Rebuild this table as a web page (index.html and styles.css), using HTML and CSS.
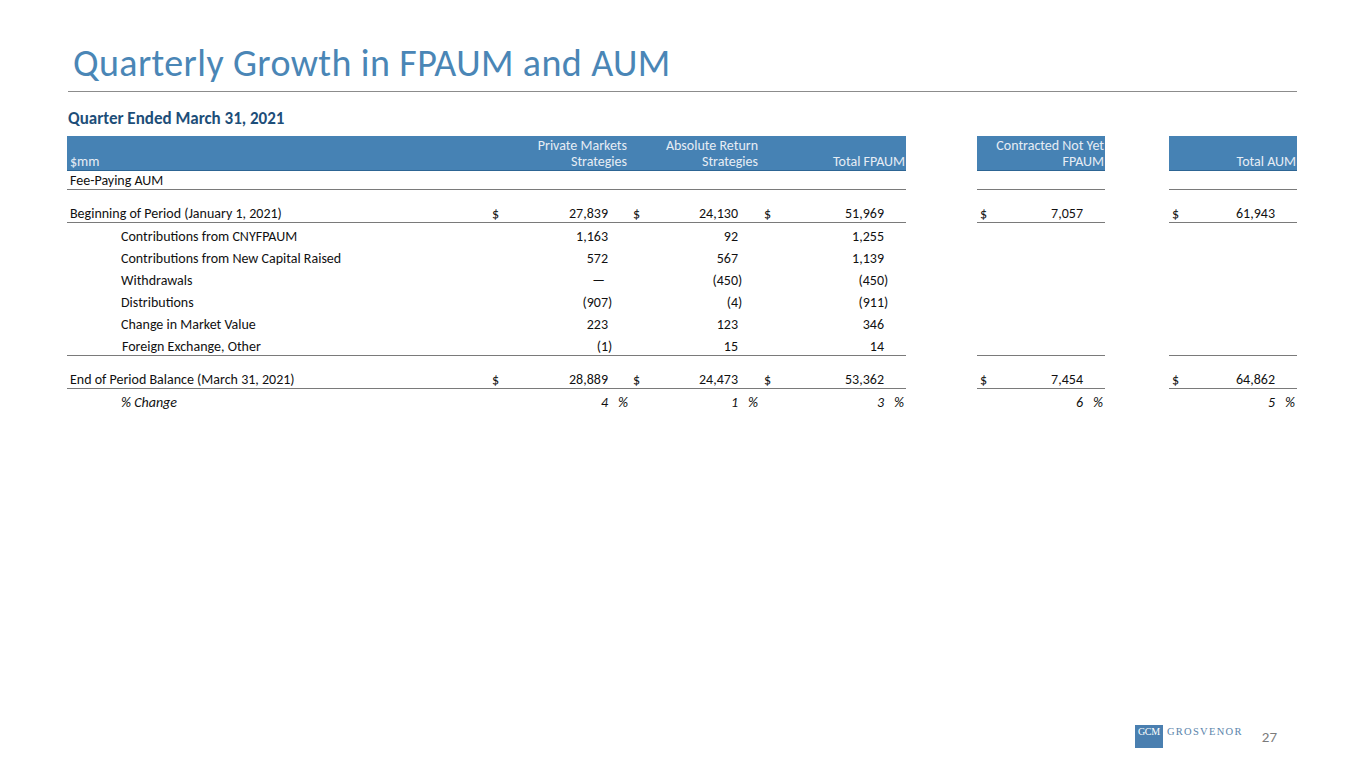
FILE: index.html
```html
<!DOCTYPE html>
<html lang="en">
<head>
<meta charset="utf-8">
<title>Quarterly Growth in FPAUM and AUM</title>
<link rel="stylesheet" href="styles.css">
</head>
<body>
<div class="slide">
  <h1 class="title">Quarterly Growth in FPAUM and AUM</h1>
  <div class="rule"></div>
  <h2 class="subtitle">Quarter Ended March 31, 2021</h2>
  <table class="aum">
    <colgroup>
      <col class="w-label"><col class="w-c1"><col class="w-c2"><col class="w-c3">
      <col class="w-gap1"><col class="w-c4"><col class="w-gap2"><col class="w-c5">
    </colgroup>
    <tr class="head">
      <th class="band lbl">$mm</th>
      <th class="band">Private Markets<br>Strategies</th>
      <th class="band">Absolute Return<br>Strategies</th>
      <th class="band">Total FPAUM</th>
      <th></th>
      <th class="band">Contracted Not Yet<br>FPAUM</th>
      <th></th>
      <th class="band">Total AUM</th>
    </tr>
    <tr class="fee">
      <td class="lbl ul">Fee-Paying AUM</td>
      <td class="ul"></td><td class="ul"></td><td class="ul"></td>
      <td></td><td class="ul"></td><td></td><td class="ul"></td>
    </tr>
    <tr class="spacer"><td colspan="8"></td></tr>
    <tr class="row first">
      <td class="lbl ul">Beginning of Period (January 1, 2021)</td>
      <td class="num ul p1"><span class="cur">$</span>27,839</td>
      <td class="num ul p2"><span class="cur">$</span>24,130</td>
      <td class="num ul p3"><span class="cur">$</span>51,969</td>
      <td></td>
      <td class="num ul p4"><span class="cur">$</span>7,057</td>
      <td></td>
      <td class="num ul p5"><span class="cur">$</span>61,943</td>
    </tr>
    <tr class="row">
      <td class="lbl ind">Contributions from CNYFPAUM</td>
      <td class="num p1">1,163</td><td class="num p2">92</td><td class="num p3">1,255</td>
      <td></td><td></td><td></td><td></td>
    </tr>
    <tr class="row">
      <td class="lbl ind">Contributions from New Capital Raised</td>
      <td class="num p1">572</td><td class="num p2">567</td><td class="num p3">1,139</td>
      <td></td><td></td><td></td><td></td>
    </tr>
    <tr class="row">
      <td class="lbl ind">Withdrawals</td>
      <td class="num p1 dash">—</td><td class="num p2">(450<span class="rp">)</span></td><td class="num p3">(450<span class="rp">)</span></td>
      <td></td><td></td><td></td><td></td>
    </tr>
    <tr class="row">
      <td class="lbl ind">Distributions</td>
      <td class="num p1">(907<span class="rp">)</span></td><td class="num p2">(4<span class="rp">)</span></td><td class="num p3">(911<span class="rp">)</span></td>
      <td></td><td></td><td></td><td></td>
    </tr>
    <tr class="row">
      <td class="lbl ind">Change in Market Value</td>
      <td class="num p1">223</td><td class="num p2">123</td><td class="num p3">346</td>
      <td></td><td></td><td></td><td></td>
    </tr>
    <tr class="row">
      <td class="lbl ind ul fx">Foreign Exchange, Other</td>
      <td class="num ul p1">(1<span class="rp">)</span></td><td class="num ul p2">15</td><td class="num ul p3">14</td>
      <td></td><td class="ul"></td><td></td><td class="ul"></td>
    </tr>
    <tr class="spacer"><td colspan="8"></td></tr>
    <tr class="row first">
      <td class="lbl ul">End of Period Balance (March 31, 2021)</td>
      <td class="num ul p1"><span class="cur">$</span>28,889</td>
      <td class="num ul p2"><span class="cur">$</span>24,473</td>
      <td class="num ul p3"><span class="cur">$</span>53,362</td>
      <td></td>
      <td class="num ul p4"><span class="cur">$</span>7,454</td>
      <td></td>
      <td class="num ul p5"><span class="cur">$</span>64,862</td>
    </tr>
    <tr class="row pct">
      <td class="lbl ind">% Change</td>
      <td class="num p1">4<span class="hang">%</span></td>
      <td class="num p2">1<span class="hang">%</span></td>
      <td class="num p3">3<span class="hang">%</span></td>
      <td></td>
      <td class="num p4">6<span class="hang">%</span></td>
      <td></td>
      <td class="num p5">5<span class="hang">%</span></td>
    </tr>
  </table>
  <footer class="footer">
    <div class="logo">
      <div class="logo-box">GCM</div>
      <div class="logo-word">GROSVENOR</div>
    </div>
    <div class="page-num">27</div>
  </footer>
</div>
</body>
</html>
```
FILE: styles.css
```css
html, body {
  margin: 0;
  padding: 0;
  background: #ffffff;
}
.slide {
  width: 1365px;
  height: 768px;
  box-sizing: border-box;
  padding: 0 68px 0 67px;
  display: flex;
  flex-direction: column;
  font-family: Carlito, Calibri, Lato, "Liberation Sans", sans-serif;
  color: #111;
}
.title {
  margin: 0;
  padding: 43px 0 0 6px;
  font-weight: normal;
  font-size: 38px;
  line-height: 40px;
  color: #4a86b6;
  letter-spacing: 0.4px;
}
.rule {
  height: 0;
  border-top: 1px solid #8c8c8c;
  margin: 8px 0 0 1px;
}
.subtitle {
  margin: 0;
  padding: 17px 0 0 1px;
  font-size: 17px;
  line-height: 20px;
  font-weight: bold;
  color: #1d4e79;
}
.aum {
  margin-top: 7px;
  border-collapse: collapse;
  table-layout: fixed;
  width: 1230px;
  font-size: 14px;
}
.w-label { width: 421px; }
.w-c1 { width: 140px; }
.w-c2 { width: 131px; }
.w-c3 { width: 147px; }
.w-gap1 { width: 71px; }
.w-c4 { width: 128px; }
.w-gap2 { width: 64px; }
.w-c5 { width: 128px; }
.aum th, .aum td {
  padding: 0;
  white-space: nowrap;
}
.aum .head th {
  height: 34px;
  vertical-align: bottom;
  text-align: right;
  font-weight: normal;
  line-height: 16px;
  color: #e6edf4;
}
.aum .head th.band {
  background: #4682b4;
  border-bottom: 1px solid #2d6594;
  padding-right: 1px;
}
.aum .head th.lbl {
  text-align: left;
  padding-left: 3px;
}
.aum .fee td {
  height: 18px;
  vertical-align: bottom;
  line-height: 16px;
}
.aum .ul {
  border-bottom: 1px solid #7a7a7a;
}
.aum .spacer td {
  height: 13px;
}
.aum .row td {
  height: 22px;
  vertical-align: bottom;
  line-height: 16px;
}
.aum .row.first td {
  height: 19px;
}
.aum td.lbl {
  text-align: left;
  padding-left: 3px;
}
.aum td.ind {
  padding-left: 54px;
}
.aum td.fx {
  padding-left: 55px;
}
.aum .pct td {
  font-style: italic;
}
.aum td.num {
  text-align: right;
}
.aum td.p1 { padding-left: 4px; padding-right: 20px; }
.aum td.p2 { padding-left: 5px; padding-right: 21px; }
.aum td.p3 { padding-left: 5px; padding-right: 22px; }
.aum td.p4 { padding-left: 3px; padding-right: 22px; }
.aum td.p5 { padding-left: 3px; padding-right: 22px; }
.aum td.dash { padding-right: 23px; }
.cur {
  float: left;
}
.rp {
  display: inline-block;
  width: 5px;
  margin-right: -5px;
  text-align: left;
}
.hang {
  display: inline-block;
  width: 20px;
  margin-right: -20px;
  text-align: right;
}
.footer {
  margin-top: auto;
  margin-bottom: 20px;
  display: flex;
  align-items: flex-start;
  justify-content: flex-end;
  padding-right: 20px;
}
.logo {
  display: flex;
  align-items: flex-start;
  gap: 4px;
  margin-right: 19px;
}
.logo-box {
  width: 28px;
  height: 23px;
  background: #4a7fb0;
  color: #ffffff;
  font-family: "Liberation Serif", "DejaVu Serif", serif;
  font-size: 10px;
  line-height: 13px;
  text-align: center;
  letter-spacing: -0.3px;
}
.logo-word {
  font-family: "Liberation Serif", "DejaVu Serif", serif;
  font-size: 10.5px;
  line-height: 13px;
  color: #5a84ab;
  letter-spacing: 1.3px;
}
.page-num {
  font-size: 15px;
  line-height: 16px;
  color: #7b7b7b;
  padding-top: 4px;
}
```
